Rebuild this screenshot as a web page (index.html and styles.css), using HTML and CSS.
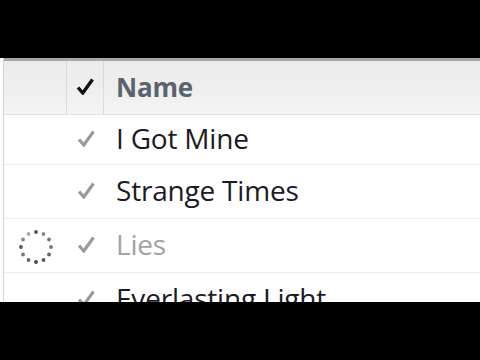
FILE: index.html
```html
<!DOCTYPE html>
<html>
<head>
<meta charset="utf-8">
<link rel="stylesheet" href="styles.css">
</head>
<body>
<div class="screen">
  <div class="bar"></div>
  <div class="panel">
    <div class="list">
      <div class="row head">
        <div class="c1"></div>
        <div class="c2"><svg class="check" viewBox="0 0 18 17" width="18" height="17"><path d="M2 9.5 L6.8 15 L16.5 1.5" fill="none" stroke="#111" stroke-width="3.4" stroke-linejoin="miter" stroke-linecap="butt"/></svg></div>
        <div class="c3 name-h">Name</div>
      </div>
      <div class="row r1">
        <div class="c1"></div>
        <div class="c2"><svg class="check" viewBox="0 0 18 17" width="18" height="17"><path d="M2 9.5 L6.8 15 L16.5 1.5" fill="none" stroke="#9a9a9a" stroke-width="3.2"/></svg></div>
        <div class="c3">I Got Mine</div>
      </div>
      <div class="row">
        <div class="c1"></div>
        <div class="c2"><svg class="check" viewBox="0 0 18 17" width="18" height="17"><path d="M2 9.5 L6.8 15 L16.5 1.5" fill="none" stroke="#9a9a9a" stroke-width="3.2"/></svg></div>
        <div class="c3">Strange Times</div>
      </div>
      <div class="row dim">
        <div class="c1">
          <svg class="spinner" viewBox="0 0 36 36" width="36" height="36">
            <circle cx="18" cy="3" r="1.9" fill="#555"/>
            <circle cx="25.5" cy="5" r="1.9" fill="#888"/>
            <circle cx="31" cy="10.5" r="1.9" fill="#777"/>
            <circle cx="33" cy="18" r="1.9" fill="#777"/>
            <circle cx="31" cy="25.5" r="1.9" fill="#666"/>
            <circle cx="25.5" cy="31" r="1.9" fill="#555"/>
            <circle cx="18" cy="33" r="1.9" fill="#444"/>
            <circle cx="10.5" cy="31" r="1.9" fill="#666"/>
            <circle cx="5" cy="25.5" r="1.9" fill="#777"/>
            <circle cx="3" cy="18" r="1.9" fill="#555"/>
            <circle cx="5" cy="10.5" r="1.9" fill="#888"/>
            <circle cx="10.5" cy="5" r="1.9" fill="#aaa"/>
          </svg>
        </div>
        <div class="c2"><svg class="check" viewBox="0 0 18 17" width="18" height="17"><path d="M2 9.5 L6.8 15 L16.5 1.5" fill="none" stroke="#9a9aa0" stroke-width="3.2"/></svg></div>
        <div class="c3">Lies</div>
      </div>
      <div class="row">
        <div class="c1"></div>
        <div class="c2"><svg class="check" viewBox="0 0 18 17" width="18" height="17"><path d="M2 9.5 L6.8 15 L16.5 1.5" fill="none" stroke="#9a9a9a" stroke-width="3.2"/></svg></div>
        <div class="c3">Everlasting Light</div>
      </div>
    </div>
  </div>
  <div class="bar"></div>
</div>
</body>
</html>
```
FILE: styles.css
```css
html, body {
  margin: 0;
  padding: 0;
  background: #000;
}
.screen {
  width: 480px;
  height: 360px;
  display: grid;
  grid-template-rows: 58px 244px 58px;
  overflow: hidden;
}
.bar {
  background: #000;
}
.panel {
  background: #fff;
  padding-left: 3px;
  overflow: hidden;
}
.list {
  height: 100%;
  border-left: 1px solid #d6d6d6;
  font-family: "Open Sans", "Noto Sans", sans-serif;
}
.row {
  display: grid;
  grid-template-columns: 63px 37px 1fr;
  height: 54px;
  border-bottom: 1px solid #ececec;
  box-sizing: border-box;
  background: #fff;
}
.row.r1 {
  height: 50px;
}
.head {
  height: 57px;
  border-top: 3px solid #a8a8a8;
  border-bottom: 1px solid #e2e2e2;
  background: linear-gradient(#ececec, #efefef 60%, #f5f5f5);
}
.c1, .c2, .c3 {
  display: flex;
  align-items: center;
}
.c1, .c2 {
  justify-content: center;
}
.head .c1, .head .c2 {
  border-right: 1px solid #dcdcdc;
}
.c2 {
  padding-bottom: 2px;
}
.c3 {
  padding-left: 12px;
  font-size: 28px;
  color: #1c1a26;
  letter-spacing: -0.2px;
  white-space: nowrap;
  padding-bottom: 4px;
}
.name-h {
  font-weight: 700;
  color: #5a636e;
  font-size: 26px;
  padding-bottom: 2px;
}
.dim .c3 {
  color: #a2a2a6;
}
.spinner {
  display: block;
  margin-top: 2px;
}
```
